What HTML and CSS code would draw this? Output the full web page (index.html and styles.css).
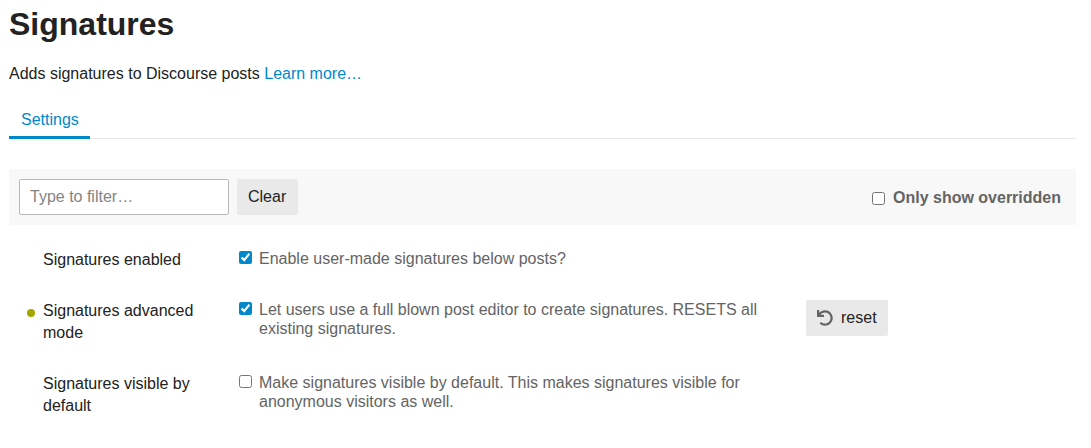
FILE: index.html
```html
<!DOCTYPE html>
<html lang="en">
<head>
    <meta charset="UTF-8">
    <title>Signatures</title>
    <link rel="stylesheet" href="styles.css">
</head>
<body>
    <div class="container">
        <h1>Signatures</h1>
        <p class="about">Adds signatures to Discourse posts <a href="#">Learn more…</a></p>

        <ul class="tabs">
            <li class="tab active"><a href="#">Settings</a></li>
        </ul>

        <div class="filter-bar">
            <input class="filter-input" type="text" placeholder="Type to filter…">
            <button class="btn">Clear</button>
            <label class="only-overridden">
                <input type="checkbox">
                <span>Only show overridden</span>
            </label>
        </div>

        <div class="settings">
            <div class="setting">
                <div class="setting-label">Signatures enabled</div>
                <label class="setting-value">
                    <input type="checkbox" checked>
                    <span>Enable user-made signatures below posts?</span>
                </label>
            </div>

            <div class="setting overridden">
                <div class="setting-label">Signatures advanced mode</div>
                <label class="setting-value">
                    <input type="checkbox" checked>
                    <span>Let users use a full blown post editor to create signatures. RESETS all existing signatures.</span>
                </label>
                <button class="btn btn-reset">
                    <svg class="icon" viewBox="0 0 512 512" width="16" height="16">
                        <path d="M212.3 224.3H12c-6.6 0-12-5.4-12-12V12C0 5.4 5.4 0 12 0h48c6.6 0 12 5.4 12 12v78.1C117.8 39.3 184.3 7.5 258.2 8c136.9 1 246.4 111.6 245.8 248.5C503.4 393.1 392.5 504 256 504c-64 0-122.300-24.300-166.300-64.200-5.100-4.600-5.300-12.500-.5-17.300l34-34c4.500-4.500 11.700-4.700 16.400-.5C170.800 415.300 211.600 432 256 432c97.300 0 176-78.700 176-176 0-97.400-78.700-176-176-176-58.500 0-110.300 28.500-142.300 72.300h98.600c6.600 0 12 5.400 12 12v48c0 6.600-5.400 12-12 12z"/>
                    </svg>
                    reset
                </button>
            </div>

            <div class="setting">
                <div class="setting-label">Signatures visible by default</div>
                <label class="setting-value">
                    <input type="checkbox">
                    <span>Make signatures visible by default. This makes signatures visible for anonymous visitors as well.</span>
                </label>
            </div>
        </div>
    </div>
</body>
</html>
```

FILE: styles.css
```css
body {
    font-family: "Liberation Sans", Arial, sans-serif;
    font-size: 16px;
    margin: 0;
    background-color: #fff;
    color: #222;
}
a {
    color: #0088cc;
    text-decoration: none;
}
input[type="checkbox"] {
    accent-color: #0088cc;
}
.container {
    margin: 0 15px 0 9px;
}
h1 {
    font-size: 32px;
    line-height: 38px;
    margin: 0;
    padding-top: 5px;
}
.about {
    margin: 21px 0 0;
    line-height: 20px;
}
.tabs {
    list-style: none;
    margin: 20px 0 0;
    padding: 0;
    display: flex;
    border-bottom: 1px solid #e9e9e9;
}
.tab a {
    display: block;
    padding: 0 12px;
    height: 32px;
    line-height: 32px;
    width: 57px;
    border-bottom: 3px solid #0088cc;
    margin-bottom: -1px;
}
.filter-bar {
    display: flex;
    align-items: center;
    gap: 8px;
    margin-top: 30px;
    padding: 10px;
    height: 36px;
    background-color: #f8f8f8;
}
.filter-input {
    box-sizing: border-box;
    width: 210px;
    height: 36px;
    margin: 0;
    padding: 0 10px;
    font: inherit;
    color: #222;
    background-color: #fff;
    border: 1px solid #b9b9b9;
    border-radius: 2px;
}
.filter-input::placeholder {
    color: #848484;
}
.btn {
    box-sizing: border-box;
    height: 36px;
    padding: 0 12px 0 11px;
    font: inherit;
    color: #222;
    background-color: #e9e9e9;
    border: 0;
    border-radius: 2px;
}
.only-overridden {
    display: flex;
    align-items: center;
    gap: 8px;
    margin-left: auto;
    margin-right: 5px;
    padding-top: 2px;
    font-weight: bold;
    color: #646464;
}
.only-overridden input {
    margin: 0;
}
.settings {
    margin-top: 24px;
}
.setting {
    display: flex;
    align-items: flex-start;
    position: relative;
    padding-left: 34px;
    margin-bottom: 29px;
}
.setting-label {
    box-sizing: border-box;
    width: 196px;
    padding-right: 16px;
    line-height: 22px;
    flex-shrink: 0;
}
.overridden::before {
    content: "";
    position: absolute;
    left: 18px;
    top: 9px;
    width: 8px;
    height: 8px;
    border-radius: 50%;
    background-color: #a6a600;
}
.setting-value {
    display: flex;
    align-items: flex-start;
    gap: 7px;
    width: 530px;
    line-height: 19.2px;
    color: #646464;
}
.setting-value input {
    flex-shrink: 0;
    margin: 2px 0 0;
}
.setting-value span {
    padding-right: 10px;
}
.btn-reset {
    display: flex;
    align-items: center;
    gap: 8px;
    margin: 0 0 0 37px;
    padding-right: 11px;
}
.icon {
    width: 16px;
    height: 16px;
    fill: #646464;
}
```
